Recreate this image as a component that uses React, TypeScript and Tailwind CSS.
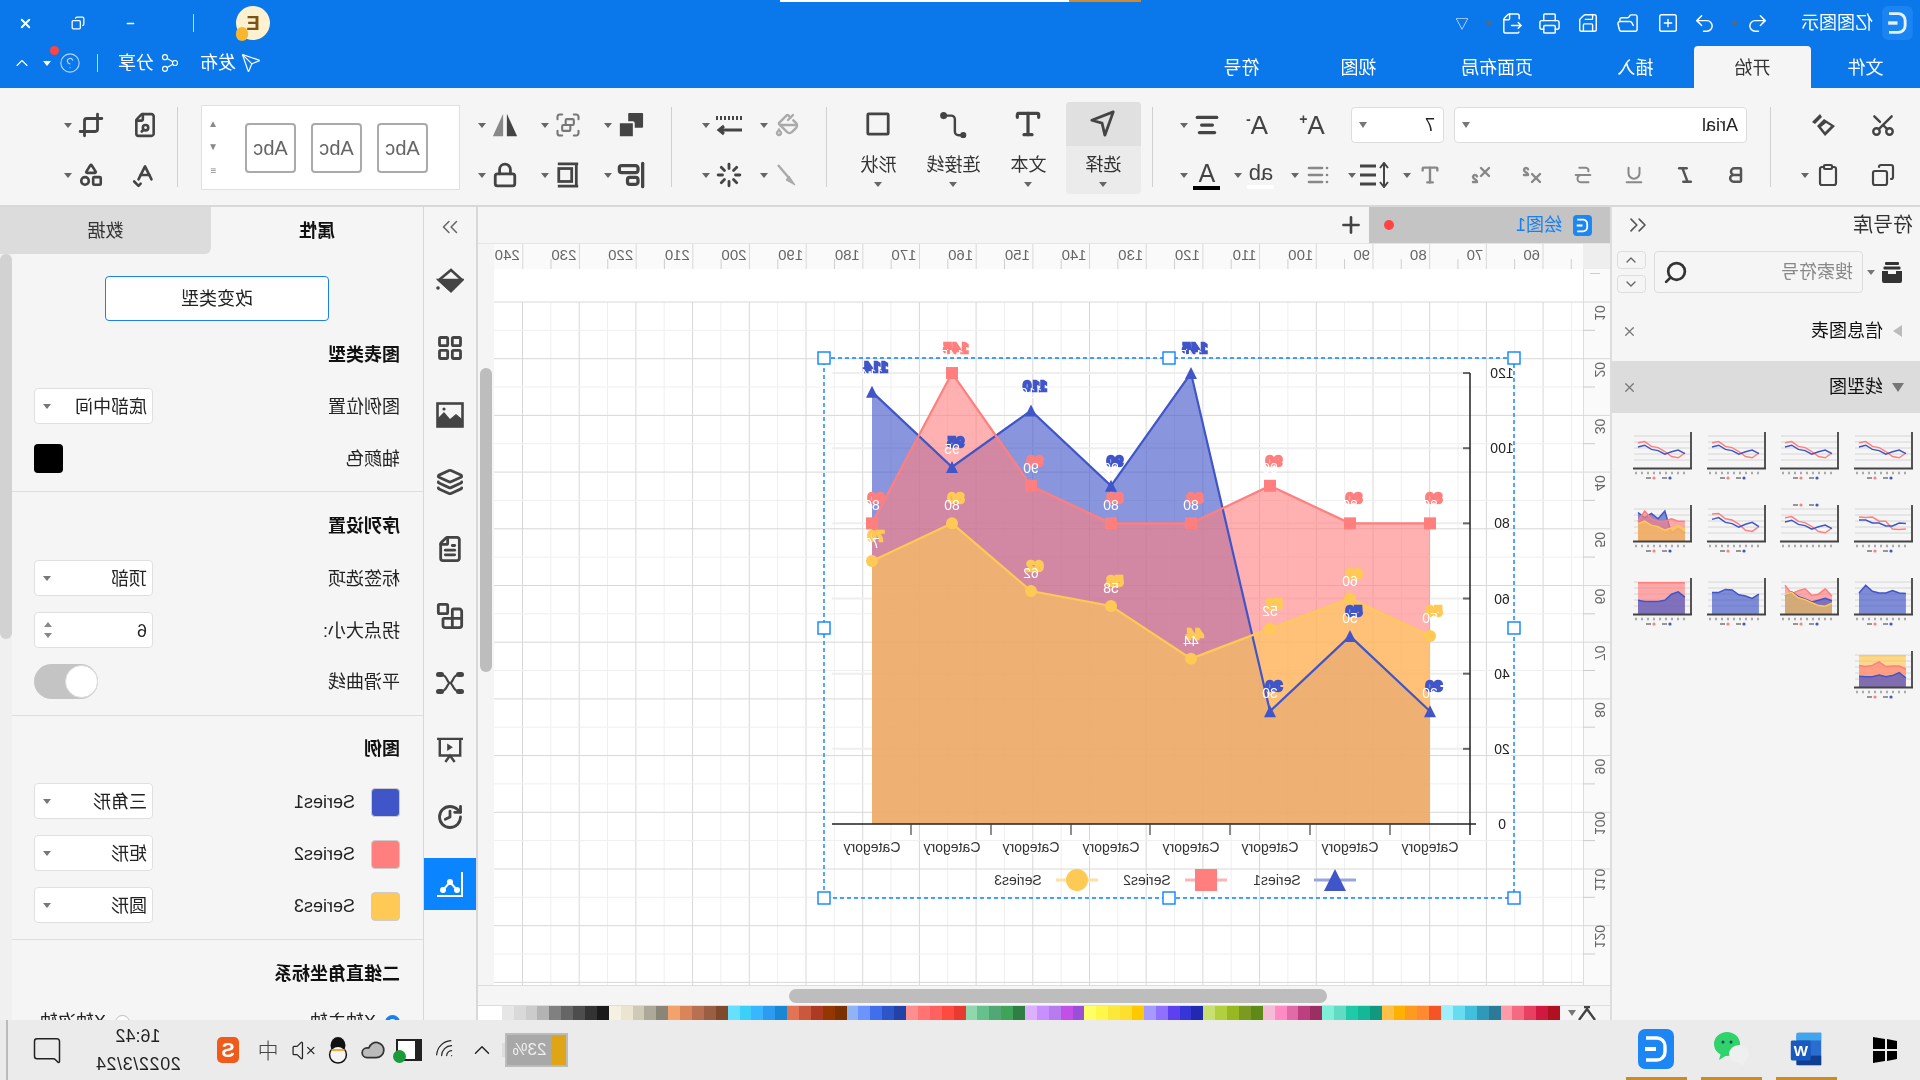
import type { ReactNode } from 'react'
import {
  AlignCenter, AlignStartVertical, Blocks, Bold, ChevronDown, ChevronUp, ChevronsLeft, CircleHelp, Clipboard, Cloud, Copy, Crop,
  FileOutput, FileSearch, FileText, FolderOpen, Group, History, Italic, Layers, LayoutGrid, List, Loader,
  Lock, MessageSquare, Minus, PaintBucket, Plus, Printer, Redo2, Save, Scissors, Search,
  Send, Shapes, Share2, SpellCheck, SquarePlus, Strikethrough, Subscript, Superscript, Type, Underline, Undo2, VolumeX,
  Wifi, X,
} from 'lucide-react'

const mx = (x: number) => 1920 - x

function Caret({ className = 'border-t-[#666]' }: { className?: string }) {
  return <span className={`ml-[3px] h-0 w-0 border-x-[4px] border-t-[5px] border-x-transparent ${className}`} />
}

function Tool({ className = '', caret, children }: { className?: string; caret?: boolean; children: ReactNode }) {
  return (
    <div className={`flex shrink-0 items-center ${className}`}>
      <div className="flex w-[32px] justify-center text-[#444]">{children}</div>
      {caret && <Caret />}
    </div>
  )
}

function Sep() {
  return <div className="h-[80px] w-[1px] shrink-0 self-center bg-[#d0d0d0]" />
}

function Rows({ className = '', children }: { className?: string; children: ReactNode }) {
  return <div className={`flex shrink-0 flex-col gap-[14px] pt-[19px] ${className}`}>{children}</div>
}

function Row({ children }: { children: ReactNode }) {
  return <div className="flex h-[36px] items-center">{children}</div>
}

function BigButton({ label, active, children }: { label: string; active?: boolean; children: ReactNode }) {
  return (
    <div className={`flex h-[92px] w-[75px] flex-col items-center rounded-sm ${active ? 'bg-[#ebebeb]' : ''}`}>
      <div className={`flex h-[44px] w-full items-center justify-center rounded-t-sm text-[#444] ${active ? 'bg-[#e0e0e0]' : ''}`}>{children}</div>
      <span className="mt-[7px] text-[18px] leading-[24px] text-[#333]">{label}</span>
      <span className="mt-[5px] h-0 w-0 border-x-[4px] border-t-[5px] border-x-transparent border-t-[#666]" />
    </div>
  )
}

function Logo({ className = '' }: { className?: string }) {
  return (
    <svg viewBox="0 0 36 40" className={className}>
      <rect width="36" height="40" rx="7" fill="#1c86f5" />
      <path d="M28 9H17a8 8 0 0 0-8 8v6a8 8 0 0 0 8 8h11" fill="none" stroke="#fff" strokeWidth="3.4" />
      <path d="M18 20h11" stroke="#fff" strokeWidth="4" />
    </svg>
  )
}

function PainterIcon({ color = '#444' }: { color?: string }) {
  return (
    <svg viewBox="0 0 26 26" className="h-[26px] w-[26px]" fill={color}>
      <path d="M16 2l8 8-3 2-7-7z" />
      <path d="M12 7l7 7-8 10-10-10z M10 11l-5 3 6 6 4-5z" fillRule="evenodd" />
    </svg>
  )
}

function Header() {
  return (
    <header className="relative h-[88px] shrink-0 bg-[#0a78ea] text-white">
      <div className="absolute left-[779px] top-0 flex h-[2px] w-[361px]">
        <div className="w-[72px] bg-[#d08a2e]" />
        <div className="flex-1 bg-white" />
      </div>
      <div className="flex h-[46px] items-center pl-[5px]">
        <Logo className="h-[34px] w-[35px] opacity-90" />
        <span className="ml-[7px] text-[18px]">亿图图示</span>
        <div className="ml-[27px] flex items-center [&_*]:!text-white">
          <Tool className="w-[53px]" caret><Undo2 size={23} strokeWidth={1.5} /></Tool>
          <Tool className="w-[37px]"><Redo2 size={23} strokeWidth={1.5} /></Tool>
          <Tool className="w-[40px]"><SquarePlus size={22} strokeWidth={1.5} /></Tool>
          <Tool className="w-[40px]"><FolderOpen size={23} strokeWidth={1.5} /></Tool>
          <Tool className="w-[38px]"><Save size={22} strokeWidth={1.5} /></Tool>
          <Tool className="w-[38px]"><Printer size={23} strokeWidth={1.5} /></Tool>
          <Tool className="w-[50px]" caret><FileOutput size={23} strokeWidth={1.5} /></Tool>
          <Tool className="w-[32px]"><span className="text-[13px] leading-none">▽</span></Tool>
        </div>
        <div className="ml-auto flex items-center pr-[10px] [&_svg]:!text-white">
          <div className="relative flex h-[34px] w-[34px] items-center justify-center rounded-full bg-[#fdf1cf] text-[20px] font-bold text-[#7a5414]">
            E
            <span className="absolute -bottom-[1px] right-0 h-[14px] w-[12px] rounded-full bg-[#f8b52e]" />
          </div>
          <div className="ml-[42px] h-[18px] w-[1px] bg-white/70" />
          <div className="ml-[46px] flex w-[53px]"><Tool><Minus size={11} strokeWidth={3} /></Tool></div>
          <div className="flex w-[52px]"><Tool><Copy size={14} strokeWidth={2.2} /></Tool></div>
          <Tool><X size={15} strokeWidth={3} /></Tool>
        </div>
      </div>
      <div className="flex h-[42px] items-end pt-[2px] text-[18px]">
        <div className="flex h-full w-[109px] items-center justify-center">文件</div>
        <div className="-mt-[2px] flex h-[42px] w-[117px] items-center justify-center rounded-t-sm bg-[#f5f5f5] pt-[2px] text-[#333]">开始</div>
        <div className="flex h-full w-[117px] items-center justify-center">插入</div>
        <div className="flex h-full w-[160px] items-center justify-center">页面布局</div>
        <div className="flex h-full w-[117px] items-center justify-center">视图</div>
        <div className="flex h-full w-[117px] items-center justify-center">符号</div>
        <div className="ml-auto flex h-full items-center pb-[10px] pr-[12px]">
          <Send size={20} strokeWidth={1.4} />
          <span className="ml-[5px]">发布</span>
          <Share2 size={20} strokeWidth={1.4} className="ml-[20px]" />
          <span className="ml-[6px]">分享</span>
          <div className="ml-[20px] h-[18px] w-[1px] bg-white/70" />
          <div className="relative ml-[16px]">
            <CircleHelp size={22} strokeWidth={1.2} className="text-[#b5d8ff]" />
            <span className="absolute -right-[9px] -top-[6px] h-[9px] w-[9px] rounded-full bg-[#f44]" />
          </div>
          <Caret className="ml-[8px] border-t-white" />
          <ChevronUp size={20} strokeWidth={1.3} className="ml-[11px]" />
        </div>
      </div>
    </header>
  )
}

function FontSelect({ className, label }: { className: string; label: string }) {
  return (
    <div className={`flex h-[36px] items-center justify-between rounded-sm border border-[#ddd] bg-white pl-[8px] pr-[7px] text-[18px] text-[#222] ${className}`}>
      {label}
      <span className="h-0 w-0 border-x-[4px] border-t-[6px] border-x-transparent border-t-[#777]" />
    </div>
  )
}

function Toolbar() {
  return (
    <div className="flex h-[119px] shrink-0 border-b-2 border-[#d8d8d8] bg-[#f5f5f5]">
      <Rows className="w-[149px] pl-[21px]">
        <Row>
          <Tool className="w-[60px]"><Scissors size={26} strokeWidth={2.2} className="-rotate-90" /></Tool>
          <Tool><PainterIcon /></Tool>
        </Row>
        <Row>
          <Tool className="w-[55px]"><Copy size={24} strokeWidth={2.2} /></Tool>
          <Tool caret><Clipboard size={24} strokeWidth={2.2} /></Tool>
        </Row>
      </Rows>
      <Sep />
      <Rows className="w-[617px] pl-[18px]">
        <Row>
          <FontSelect className="ml-[5px] w-[293px]" label="Arial" />
          <FontSelect className="ml-[10px] w-[93px]" label="7" />
          <Tool className="ml-[23px] w-[55px]"><span className="text-[26px] leading-none">A<span className="align-top text-[14px] font-bold">+</span></span></Tool>
          <Tool className="w-[50px]"><span className="text-[26px] leading-none">A<span className="align-top text-[14px] font-bold">-</span></span></Tool>
          <Tool caret><AlignCenter size={26} strokeWidth={3} /></Tool>
        </Row>
        <Row>
          <Tool className="w-[51px]"><Bold size={20} strokeWidth={3} className="text-[#555]" /></Tool>
          <Tool className="w-[51px]"><Italic size={20} strokeWidth={3} className="text-[#555]" /></Tool>
          <Tool className="w-[51px]"><Underline size={22} strokeWidth={2.2} className="text-[#888]" /></Tool>
          <Tool className="w-[51px]"><Strikethrough size={22} strokeWidth={2.2} className="text-[#888]" /></Tool>
          <Tool className="w-[51px]"><Superscript size={24} strokeWidth={2.4} className="text-[#888]" /></Tool>
          <Tool className="w-[51px]"><Subscript size={24} strokeWidth={2.4} className="text-[#888]" /></Tool>
          <Tool className="w-[55px]" caret><Type size={22} strokeWidth={2.6} className="text-[#888]" /></Tool>
          <Tool className="w-[57px]" caret>
            <svg viewBox="0 0 30 26" className="h-[26px] w-[30px]" fill="none" stroke="#444">
              <path d="M6 1v24M2 6l4-5 4 5M2 20l4 5 4-5" strokeWidth="2" />
              <path d="M14 4h16M14 13h16M14 22h16" strokeWidth="3.2" />
            </svg>
          </Tool>
          <Tool className="w-[57px]" caret><List size={24} strokeWidth={2.6} className="text-[#888]" /></Tool>
          <Tool className="w-[54px]" caret>
            <div className="flex flex-col items-center text-[22px] font-medium leading-[24px]">ab<span className="h-[4px] w-[27px] bg-white" /></div>
          </Tool>
          <Tool caret>
            <div className="flex flex-col items-center text-[25px] leading-[26px]">A<span className="h-[4px] w-[27px] bg-black" /></div>
          </Tool>
        </Row>
      </Rows>
      <Sep />
      <div className="ml-[11px] mr-[14px] flex shrink-0 pt-[14px]">
        <BigButton label="选择" active>
          <svg viewBox="0 0 30 32" className="h-[30px] w-[28px]" fill="none" stroke="#444" strokeWidth="3" strokeLinejoin="round">
            <path d="M4 3l23 9-11 3-3 13z" />
          </svg>
        </BigButton>
        <BigButton label="文本"><Type size={32} strokeWidth={2.4} /></BigButton>
        <BigButton label="连接线">
          <svg viewBox="0 0 30 30" className="h-[28px] w-[28px]" fill="none" stroke="#444" strokeWidth="2.6">
            <path d="M5 27h4a4 4 0 0 0 4-4V10a4 4 0 0 1 4-4h5" /><circle cx="25" cy="6" r="2.5" fill="#444" /><circle cx="4" cy="27" r="2" fill="#444" />
          </svg>
        </BigButton>
        <BigButton label="形状">
          <svg viewBox="0 0 28 28" className="h-[26px] w-[26px]" fill="none" stroke="#444" strokeWidth="3"><rect x="3" y="3" width="22" height="22" rx="1" /></svg>
        </BigButton>
      </div>
      <Sep />
      <Rows className="w-[154px] pl-[23px]">
        <Row>
          <Tool className="w-[58px]" caret><PaintBucket size={24} strokeWidth={2.4} className="text-[#aaa]" /></Tool>
          <Tool caret>
            <svg viewBox="0 0 28 24" className="h-[24px] w-[28px]" fill="none" stroke="#444">
              <path d="M1 5h26" strokeWidth="4" strokeDasharray="2 2" /><path d="M1 17h22M19 13l5 4-5 4" strokeWidth="3" />
            </svg>
          </Tool>
        </Row>
        <Row>
          <Tool className="w-[58px]" caret>
            <svg viewBox="0 0 24 24" className="h-[24px] w-[24px]" fill="none" stroke="#aaa"><path d="M21 2 10 15" strokeWidth="2.4" /><path d="M10 13 4 22l9-5z" fill="#aaa" strokeWidth="1" /></svg>
          </Tool>
          <Tool caret><Loader size={26} strokeWidth={2.6} /></Tool>
        </Row>
      </Rows>
      <Sep />
      <Rows className="w-[211px] pl-[24px]">
        <Row>
          <Tool className="w-[63px]" caret>
            <svg viewBox="0 0 28 28" className="h-[26px] w-[26px]" fill="#444"><rect x="1" y="1" width="16" height="16" rx="1" /><rect x="11" y="11" width="16" height="16" rx="1" stroke="#f5f5f5" strokeWidth="2" /></svg>
          </Tool>
          <Tool className="w-[63px]" caret><Group size={28} strokeWidth={1.8} className="text-[#777]" /></Tool>
          <Tool caret>
            <svg viewBox="0 0 30 28" className="h-[28px] w-[28px]"><path d="M2 26 13 2v24z" fill="#444" /><path d="M17 2v24h11z" fill="#888" /></svg>
          </Tool>
        </Row>
        <Row>
          <Tool className="w-[63px]" caret><AlignStartVertical size={28} strokeWidth={2.8} /></Tool>
          <Tool className="w-[63px]" caret>
            <svg viewBox="0 0 26 28" className="h-[28px] w-[24px]" fill="none" stroke="#444" strokeWidth="3"><path d="M2 2h22M2 26h22" /><rect x="9" y="7" width="14" height="14" /><path d="M4 2v24" /></svg>
          </Tool>
          <Tool caret><Lock size={26} strokeWidth={2.6} /></Tool>
        </Row>
      </Rows>
      <div className="mt-[17px] flex h-[85px] w-[259px] shrink-0 items-center border border-[#e0e0e0] bg-white pl-[31px] pr-[6px]">
        {[0, 1, 2].map((i) => (
          <div key={i} className="mr-[15px] flex h-[50px] w-[51px] items-center justify-center rounded border-2 border-[#aaa] text-[20px] text-[#666]">Abc</div>
        ))}
        <div className="ml-auto flex h-full flex-col items-center justify-around py-[6px] text-[10px] leading-none text-[#888]">
          <span>▲</span><span>▼</span><span>≡</span>
        </div>
      </div>
      <div className="w-[23px] shrink-0" />
      <Sep />
      <Rows className="pl-[16px]">
        <Row>
          <Tool className="w-[54px]"><FileSearch size={26} strokeWidth={2.4} /></Tool>
          <Tool caret><Crop size={26} strokeWidth={2.6} /></Tool>
        </Row>
        <Row>
          <Tool className="w-[54px]"><SpellCheck size={26} strokeWidth={2.4} /></Tool>
          <Tool caret><Shapes size={26} strokeWidth={2.4} /></Tool>
        </Row>
      </Rows>
    </div>
  )
}

type Mini = { legendTop?: boolean; s: { c: string; v: number[]; area?: boolean }[] }
const R1 = [84, 88, 72, 68, 55, 38, 34, 50]
const B1 = [70, 76, 62, 58, 46, 54, 60, 48]
const lineThumb = (r: number[] = R1, b: number[] = B1, legendTop = false): Mini => ({ legendTop, s: [{ c: '#ff7f7f', v: r }, { c: '#4055c8', v: b }] })
const AREA3: Mini = {
  s: [
    { c: '#4055c8', v: [95, 78, 92, 74, 100, 26, 42, 26], area: true },
    { c: '#ff7f7f', v: [66, 100, 74, 66, 66, 74, 66, 66], area: true },
    { c: '#ffc955', v: [58, 66, 52, 48, 36, 44, 50, 40], area: true },
  ],
}
const thumbs: Mini[] = [
  lineThumb(), lineThumb(), lineThumb(), lineThumb(),
  lineThumb([80, 78, 80, 66, 66, 40, 38, 40], [70, 70, 60, 60, 50, 50, 60, 58]),
  lineThumb(R1, B1, true),
  lineThumb([90, 92, 74, 70, 56, 36, 32, 48], [72, 78, 62, 58, 46, 56, 62, 48]),
  AREA3,
  { s: [{ c: '#4055c8', v: [70, 96, 76, 70, 70, 78, 70, 68], area: true }] },
  { s: [
    { c: '#ff7f7f', v: [96, 68, 78, 84, 62, 66, 84, 60], area: true },
    { c: '#4055c8', v: [60, 74, 58, 50, 40, 46, 52, 44], area: true },
    { c: '#ffc955', v: [66, 72, 54, 48, 38, 28, 26, 36], area: true },
  ] },
  { s: [{ c: '#4055c8', v: [72, 72, 82, 80, 64, 60, 52, 66], area: true }] },
  { s: [
    { c: '#ff7f7f', v: [104, 104, 104, 104, 104, 104, 104, 104], area: true },
    { c: '#4055c8', v: [46, 42, 42, 42, 46, 66, 74, 56], area: true },
  ] },
  { s: [
    { c: '#ffc955', v: [104, 104, 104, 104, 104, 104, 104, 104], area: true },
    { c: '#ff7f7f', v: [72, 68, 72, 84, 68, 70, 70, 60], area: true },
    { c: '#4055c8', v: [36, 34, 34, 40, 34, 38, 48, 30], area: true },
  ] },
]

function MiniChart({ t }: { t: Mini }) {
  const px = (i: number) => 6 + i * 6.7
  const py = (v: number) => (t.legendTop ? 41 : 39) - v * 0.3
  return (
    <svg viewBox="0 0 66 52" className="h-[52px] w-[66px] blur-[0.5px]">
      <g transform="translate(66 0) scale(-1 1)">
        {[7, 13, 19, 25, 31].map((y) => <path key={y} d={`M2 ${y}H58`} stroke="#d4d4d4" strokeWidth="0.9" />)}
        {t.s.map((s, i) => (
          <g key={i}>
            {s.area && <polygon points={`${px(0)},39 ${s.v.map((v, j) => `${px(j)},${py(v)}`).join(' ')} ${px(7)},39`} fill={s.c} fillOpacity="0.66" />}
            <polyline points={s.v.map((v, j) => `${px(j)},${py(v)}`).join(' ')} fill="none" stroke={s.c} strokeWidth="1.5" />
          </g>
        ))}
        <path d="M1 39.5H60M59 3V40" stroke="#444" strokeWidth="1.8" />
        <path d="M3 44h54" stroke="#aaa" strokeWidth="2.4" strokeDasharray="2 4" />
        <circle cx="22" cy={t.legendTop ? 3 : 49} r="1.6" fill="#ff7f7f" />
        <circle cx="38" cy={t.legendTop ? 3 : 49} r="1.6" fill="#4055c8" />
        <path d={t.legendTop ? 'M14 3h5M30 3h5' : 'M14 49h5M30 49h5'} stroke="#777" strokeWidth="1.4" />
      </g>
    </svg>
  )
}

function SymbolPanel() {
  return (
    <aside className="flex w-[310px] shrink-0 flex-col border-r-2 border-[#ddd] bg-[#f5f5f5]">
      <div className="flex h-[36px] items-center justify-between pl-[7px] pr-[12px]">
        <span className="text-[20px] text-[#333]">符号库</span>
        <ChevronsLeft size={28} strokeWidth={1.4} className="text-[#555]" />
      </div>
      <div className="mt-[8px] flex h-[42px] items-center pl-[17px]">
        <svg viewBox="0 0 22 22" className="h-[22px] w-[22px]" fill="#333">
          <rect x="4" y="1" width="14" height="3" rx="1" /><rect x="2.5" y="5.5" width="17" height="3" rx="1" />
          <path d="M1 10h6v3h8v-3h6v10a2 2 0 0 1-2 2H3a2 2 0 0 1-2-2z" />
        </svg>
        <Caret className="ml-[6px] border-t-[#777]" />
        <div className="ml-[4px] flex h-[42px] w-[209px] items-center justify-between rounded-sm border border-[#ddd] pl-[9px] pr-[8px]">
          <span className="text-[18px] text-[#888]">搜索符号</span>
          <Search size={25} strokeWidth={2.6} className="text-[#333]" />
        </div>
        <div className="ml-[8px] flex w-[29px] flex-col gap-[6px]">
          <div className="flex h-[18px] items-center justify-center rounded-sm border border-[#ddd]"><ChevronUp size={16} className="text-[#666]" /></div>
          <div className="flex h-[18px] items-center justify-center rounded-sm border border-[#ddd]"><ChevronDown size={16} className="text-[#666]" /></div>
        </div>
      </div>
      <div className="mt-[12px] flex h-[52px] items-center pl-[18px] pr-[10px]">
        <span className="h-0 w-0 border-y-[6px] border-l-[9px] border-y-transparent border-l-[#bbb]" />
        <span className="ml-[10px] text-[18px] text-[#111]">信息图表</span>
        <X size={15} className="ml-auto text-[#777]" />
      </div>
      <div className="mt-[4px] flex h-[52px] items-center bg-[#dcdcdc] pl-[16px] pr-[10px]">
        <span className="h-0 w-0 border-x-[6px] border-t-[9px] border-x-transparent border-t-[#777]" />
        <span className="ml-[9px] text-[18px] text-[#111]">线型图</span>
        <X size={15} className="ml-auto text-[#777]" />
      </div>
      <div className="grid grid-cols-[repeat(4,73.5px)] gap-y-[21px] pl-[1px] pt-[16px]">
        {thumbs.map((t, i) => (
          <MiniChart key={i} t={t} />
        ))}
      </div>
    </aside>
  )
}

const tickX = (v: number) => 1543 - (v - 60) * 5.668

function HRuler() {
  const values = Array.from({ length: 19 }, (_, i) => 60 + i * 10)
  return (
    <svg viewBox="337 243 1089 26" className="h-[26px] w-[1089px] bg-[#fafafa]">
      {values.map((v) => (
        <g key={v}>
          <path d={`M${mx(tickX(v))} 243V269`} stroke="#d8d8d8" strokeWidth="1" />
          <path d={`M${mx(tickX(v) + 28.3)} 258V269`} stroke="#cfcfcf" strokeWidth="1" />
          <text x={mx(tickX(v)) + 3} y="259" fontSize="15" fill="#666" fontFamily="Liberation Sans">{v}</text>
        </g>
      ))}
      <path d="M337 268.5H1426" stroke="#ddd" />
    </svg>
  )
}

function VRuler() {
  return (
    <svg viewBox="310 269 27 716" className="h-[716px] w-[27px] shrink-0 bg-[#fafafa]">
      <path d="M336.5 269V985" stroke="#ddd" />
      <path d="M320 273.5H330" stroke="#ccc" />
      {Array.from({ length: 12 }, (_, k) => {
        const y = 302 + k * 56.7
        return (
          <g key={k}>
            <path d={`M310 ${y}H337`} stroke="#d8d8d8" />
            <path d={`M325 ${y + 28.3}H337`} stroke="#ccc" />
            <text transform={`translate(325 ${y + 11}) rotate(-90)`} textAnchor="middle" fontSize="14" fill="#666" fontFamily="Liberation Sans">{(k + 1) * 10}</text>
          </g>
        )
      })}
    </svg>
  )
}

const chartX = [872, 952, 1031, 1111, 1191, 1270, 1350, 1430]
const cy = (v: number) => 824 - 3.758 * v
const series = [
  { color: '#4055c8', shape: 'tri', v: [115, 95, 110, 90, 120, 30, 50, 30], lab: ['114', '95', '110', '90', '145', '30', '50', '30'] },
  { color: '#ff7f7f', shape: 'sq', v: [80, 120, 90, 80, 80, 90, 80, 80], lab: ['80', '145', '90', '80', '80', '90', '80', '80'] },
  { color: '#ffc955', shape: 'dot', v: [70, 80, 62, 58, 44, 52, 60, 50], lab: ['70', '80', '62', '58', '44', '52', '60', '50'] },
]

function Marker({ shape, color, x, y, r = 6 }: { shape: string; color: string; x: number; y: number; r?: number }) {
  if (shape === 'tri') return <polygon points={`${x - r},${y + r} ${x + r},${y + r} ${x},${y - r}`} fill={color} />
  if (shape === 'sq') return <rect x={x - r} y={y - r} width={r * 2} height={r * 2} fill={color} />
  return <circle cx={x} cy={y} r={r} fill={color} />
}

function CanvasArt() {
  const majorX = Array.from({ length: 20 }, (_, i) => 522.5 + i * 56.7)
  const majorY = Array.from({ length: 13 }, (_, i) => 302 + i * 56.7)
  const handles = [[824, 358], [1169, 358], [1514, 358], [824, 628], [1514, 628], [824, 898], [1169, 898], [1514, 898]]
  return (
    <svg viewBox="337 269 1089 716" className="absolute inset-0 h-full w-full" fontFamily="Liberation Sans">
      {/* page grid */}
      {majorX.map((x) => (
        <g key={x}>
          <path d={`M${mx(x + 28.3)} 302V985`} stroke="#efefef" />
          <path d={`M${mx(x)} 302V985`} stroke="#d8d8d8" />
        </g>
      ))}
      {majorY.map((y) => (
        <g key={y}>
          <path d={`M337 ${y + 28.3}H1426`} stroke="#efefef" />
          <path d={`M337 ${y}H1426`} stroke="#d8d8d8" />
        </g>
      ))}

      {/* value lines and axes */}
      {[20, 40, 60, 80, 100, 120].map((v) => (
        <g key={v}>
          <path d={`M${mx(832)} ${cy(v)}H${mx(1470)}`} stroke="#eee" strokeWidth="2" />
          <path d={`M${mx(1470)} ${cy(v)}H${mx(1463)}`} stroke="#666" strokeWidth="2" />
        </g>
      ))}
      {series.map((s) => {
        const pts = s.v.map((v, i) => `${mx(chartX[i])},${cy(v)}`).join(' ')
        return <polygon key={s.color} points={`${mx(chartX[0])},824 ${pts} ${mx(chartX[7])},824`} fill={s.color} fillOpacity="0.62" />
      })}
      {series.map((s) => (
        <polyline key={s.color} points={s.v.map((v, i) => `${mx(chartX[i])},${cy(v)}`).join(' ')} fill="none" stroke={s.color} strokeWidth="2.2" />
      ))}
      <path d={`M${mx(832)} 824H${mx(1476)}M${mx(1470)} 373V835`} stroke="#222" strokeWidth="1.5" fill="none" />
      {[911, 991, 1071, 1150, 1230, 1310, 1390].map((x) => <path key={x} d={`M${mx(x)} 824V835`} stroke="#444" strokeWidth="1.2" />)}
      {[0, 20, 40, 60, 80, 100, 120].map((v) => (
        <text key={v} x={mx(1502)} y={cy(v) + 5} textAnchor="middle" fontSize="14" fill="#222" stroke="#fff" strokeWidth="3" paintOrder="stroke">{v}</text>
      ))}
      {chartX.map((x) => (
        <text key={x} x={mx(x)} y="852" textAnchor="middle" fontSize="14" fill="#333" stroke="#fff" strokeWidth="3" paintOrder="stroke">Category</text>
      ))}

      {/* markers and data labels */}
      {series.map((s) => s.v.map((v, i) => <Marker key={s.color + i} shape={s.shape} color={s.color} x={mx(chartX[i])} y={cy(v)} />))}
      {series.map((s) => s.v.map((v, i) => (
        <g key={s.color + i} textAnchor="middle">
          <text x={mx(chartX[i] + 4)} y={cy(v) - 20} fontSize="15" fill={s.color} stroke={s.color} strokeWidth="2.4" fontWeight="bold">{s.lab[i]}</text>
          <text x={mx(chartX[i])} y={cy(v) - 13} fontSize="14" fill="#fff">{s.lab[i]}</text>
        </g>
      )))}

      {/* legend */}
      <g fontSize="14" fill="#333">
        <path d={`M${mx(1356)} 880H${mx(1314)}`} stroke="#98a3e0" strokeWidth="3" />
        <Marker shape="tri" color="#4055c8" x={mx(1335)} y={880} r={11} />
        <text x={mx(1277)} y="885" textAnchor="middle">Series1</text>
        <path d={`M${mx(1227)} 880H${mx(1185)}`} stroke="#ffb4b4" strokeWidth="3" />
        <Marker shape="sq" color="#ff7f7f" x={mx(1206)} y={880} r={11} />
        <text x={mx(1147)} y="885" textAnchor="middle">Series2</text>
        <path d={`M${mx(1098)} 880H${mx(1056)}`} stroke="#ffe0a0" strokeWidth="3" />
        <Marker shape="dot" color="#ffc955" x={mx(1077)} y={880} r={11} />
        <text x={mx(1018)} y="885" textAnchor="middle">Series3</text>
      </g>

      {/* selection */}
      <rect x={mx(1514)} y="358" width="690" height="540" fill="none" stroke="#0a84ff" strokeWidth="1.4" strokeDasharray="4 3" />
      {handles.map(([x, y]) => (
        <rect key={`${x}-${y}`} x={mx(x) - 6} y={y - 6} width="12" height="12" fill="#fff" stroke="#0a84ff" strokeWidth="1.4" />
      ))}
    </svg>
  )
}

const palette = [
  '#ffffff', '#ffffff', '#e6e6e6', '#d9d9d9', '#cccccc', '#b3b3b3', '#808080', '#666666', '#4d4d4d', '#333333', '#1a1a1a',
  '#f5f0e0', '#ebe5d0', '#cfcab5', '#ada998', '#8a8577',
  '#f4a26c', '#d98459', '#b97050', '#9a5f42', '#7f4a2c',
  '#66e0ff', '#3cd0f8', '#38b6ff', '#2d9cf0', '#1b87d4',
  '#e27453', '#c9583c', '#ad3a22', '#933600', '#7a3000',
  '#8fb4f5', '#6c94ff', '#3f6fec', '#2d55c8', '#2342a8',
  '#ff8e8e', '#ff7373', '#ff6060', '#ff4a3f', '#e83a2f',
  '#8fd8ad', '#66c08c', '#52a874', '#3fa35a', '#2f7f44',
  '#dcb0ff', '#c78fff', '#b77aef', '#c24fe8', '#9a4fd8',
  '#ffff66', '#fff84a', '#fbe93a', '#ffdf2e', '#ffc900',
  '#a59aff', '#8f70ff', '#5f40f0', '#3636d8', '#2228b0',
  '#c8e070', '#b0d040', '#96b820', '#7a9a20', '#5f8a15',
  '#f5bcd8', '#ff8ac4', '#e36aa8', '#bc4080', '#9c2f62',
  '#7ff0d8', '#60dcc4', '#1fcaa8', '#14b898', '#109880',
  '#ffc048', '#ffb000', '#ff9a1f', '#ff8a32', '#f55426',
  '#9ff0ff', '#66dcf0', '#40c0dc', '#3098b8', '#2a7a98',
  '#ff9aa8', '#f56a80', '#e84060', '#d01840', '#b01020',
]

function Center() {
  return (
    <main className="flex w-[1132px] shrink-0 flex-col bg-[#f5f5f5]">
      <div className="flex h-[36px] shrink-0 items-center">
        <div className="flex h-full w-[241px] items-center bg-[#c4c4c4] pl-[18px]">
          <Logo className="h-[21px] w-[19px]" />
          <span className="ml-[11px] text-[18px] text-[#1a80f0]">绘图1</span>
          <span className="ml-auto mr-[15px] h-[10px] w-[10px] rounded-full bg-[#f44]" />
        </div>
        <Plus size={26} strokeWidth={2.4} className="ml-[5px] text-[#444]" />
      </div>
      <div className="flex h-[26px] shrink-0 border-t border-[#e4e4e4]">
        <div className="w-[27px] shrink-0 bg-[#eee]" />
        <HRuler />
      </div>
      <div className="flex h-[716px] shrink-0">
        <VRuler />
        <div className="relative w-[1089px] shrink-0 overflow-hidden bg-white">
          <CanvasArt />
        </div>
        <div className="flex w-[16px] shrink-0 justify-center bg-[#f5f5f5] pt-[99px]">
          <div className="h-[304px] w-[12px] rounded-full bg-[#bdbdbd]" />
        </div>
      </div>
      <div className="flex h-[21px] shrink-0 items-center border-y border-[#ddd] pl-[283px]">
        <div className="h-[14px] w-[538px] rounded-full bg-[#bdbdbd]" />
      </div>
      <div className="flex h-[14px] shrink-0">
        <div className="flex w-[50px] shrink-0 items-center pl-[14px]">
          <svg viewBox="0 0 18 14" className="h-[14px] w-[18px]" fill="none" stroke="#444" strokeWidth="2.4"><path d="M1 14 9 3l8 11M6 1h6" /></svg>
          <span className="ml-[2px] h-0 w-0 border-x-[4px] border-t-[6px] border-x-transparent border-t-[#777]" />
        </div>
        <div className="flex flex-1 flex-row-reverse">
          {palette.map((c, i) => <div key={i} className="flex-1" style={{ backgroundColor: c }} />)}
        </div>
      </div>
    </main>
  )
}

function RailIcon({ children }: { children: ReactNode }) {
  return <div className="flex h-[67px] items-center justify-center text-[#444]">{children}</div>
}

function Rail() {
  return (
    <div className="flex w-[55px] shrink-0 flex-col border-l-2 border-r border-[#d8d8d8] bg-[#f5f5f5]">
      <div className="flex h-[40px] items-center justify-center">
        <ChevronsLeft size={26} strokeWidth={1.4} className="-scale-x-100 text-[#666]" />
      </div>
      <RailIcon>
        <svg viewBox="0 0 28 28" className="h-[28px] w-[28px]" fill="none" stroke="#444" strokeWidth="2.6">
          <path d="M13 3 2 13l11 11 12-11z" /><path d="M2 13h23L13 24z" fill="#444" /><circle cx="26" cy="21" r="1.8" fill="#444" stroke="none" />
        </svg>
      </RailIcon>
      <RailIcon><LayoutGrid size={28} strokeWidth={2.4} /></RailIcon>
      <RailIcon>
        <svg viewBox="0 0 28 26" className="h-[26px] w-[28px]" fill="none" stroke="#444" strokeWidth="2.6">
          <rect x="1.5" y="1.5" width="25" height="23" /><path d="M2 24v-7l6-5 6 5 6-7 6 6v8z" fill="#444" stroke="none" /><circle cx="20" cy="7" r="1.6" fill="#444" stroke="none" />
        </svg>
      </RailIcon>
      <RailIcon><Layers size={28} strokeWidth={2.4} /></RailIcon>
      <RailIcon><FileText size={28} strokeWidth={2.4} /></RailIcon>
      <RailIcon><Blocks size={28} strokeWidth={2.4} /></RailIcon>
      <RailIcon>
        <svg viewBox="0 0 28 24" className="h-[24px] w-[28px]" fill="#444">
          <rect x="0" y="1" width="8" height="5" rx="2.5" /><rect x="20" y="1" width="8" height="5" rx="2.5" />
          <rect x="0" y="18" width="8" height="5" rx="2.5" /><rect x="20" y="18" width="8" height="5" rx="2.5" />
          <path d="M6 4c5 0 5 8 8 8s3-8 8-8M6 20c5 0 5-8 8-8s3 8 8 8" fill="none" stroke="#444" strokeWidth="2.2" />
        </svg>
      </RailIcon>
      <RailIcon>
        <svg viewBox="0 0 30 28" className="h-[26px] w-[28px]" fill="none" stroke="#444" strokeWidth="2.6">
          <path d="M1 2h28M4 2v18h22V2M10 27l5-7 5 7" /><path d="M18 7v8l-6-4z" fill="#444" stroke="none" />
        </svg>
      </RailIcon>
      <RailIcon><History size={28} strokeWidth={2.4} /></RailIcon>
      <div className="flex h-[67px] items-center">
        <div className="flex h-[52px] w-full items-center justify-center bg-[#0a84ff]">
          <svg viewBox="0 0 28 28" className="h-[28px] w-[28px]" fill="none" stroke="#fff" strokeWidth="2">
            <path d="M2 2v24h25" /><path d="M7 20l7-8 7 8" />
            <circle cx="7" cy="20" r="2" fill="#fff" /><circle cx="14" cy="12" r="2" fill="#fff" /><circle cx="21" cy="20" r="2" fill="#fff" />
          </svg>
        </div>
      </div>
    </div>
  )
}

function Control({ children, spin }: { children: ReactNode; spin?: boolean }) {
  return (
    <div className="flex h-[36px] w-[119px] items-center justify-between rounded-sm border border-[#e0e0e0] bg-white pl-[5px] pr-[8px] text-[18px] text-[#222]">
      <span className="pt-[2px]">{children}</span>
      {spin ? (
        <span className="flex flex-col gap-[6px] pr-[1px]">
          <span className="h-0 w-0 border-x-[4px] border-b-[5px] border-x-transparent border-b-[#888]" />
          <span className="h-0 w-0 border-x-[4px] border-t-[5px] border-x-transparent border-t-[#888]" />
        </span>
      ) : (
        <span className="h-0 w-0 border-x-[4px] border-t-[5px] border-x-transparent border-t-[#777]" />
      )}
    </div>
  )
}

function PropRow({ label, className = 'mt-[16px]', children }: { label: ReactNode; className?: string; children: ReactNode }) {
  return (
    <div className={`flex h-[36px] shrink-0 items-center justify-between pl-[23px] pr-[22px] text-[18px] text-[#222] ${className}`}>
      <span className="pt-[2px]">{label}</span>
      {children}
    </div>
  )
}

function SectionTitle({ className, children }: { className: string; children: ReactNode }) {
  return <div className={`flex h-[28px] shrink-0 items-center pl-[23px] text-[18px] font-bold text-[#111] ${className}`}>{children}</div>
}

function SeriesLabel({ name, swatch }: { name: string; swatch: string }) {
  return (
    <span className="flex items-center">
      <span className={`h-[29px] w-[29px] rounded-sm border border-[#ccc] ${swatch}`} />
      <span className="ml-[16px]">{name}</span>
    </span>
  )
}

function PropPanel() {
  return (
    <aside className="flex w-[423px] shrink-0 flex-col overflow-hidden bg-[#f5f5f5]">
      <div className="flex h-[47px] shrink-0 pt-[1px] text-[18px]">
        <div className="flex w-[212px] items-center justify-center font-bold text-[#111]">属性</div>
        <div className="-mt-[1px] flex flex-1 items-center justify-center rounded-bl-md bg-[#dcdcdc] pt-[1px] text-[#333]">数据</div>
      </div>
      <div className="flex min-h-0 flex-1">
        <div className="flex min-w-0 flex-1 flex-col">
          <div className="ml-[94px] mt-[22px] flex h-[45px] w-[224px] shrink-0 items-center justify-center rounded-sm border border-[#1a80f0] bg-white pt-[2px] text-[18px] text-[#222]">改变类型</div>
          <SectionTitle className="mt-[20px]">图表类型</SectionTitle>
          <PropRow label="图例位置" className="mt-[19px]"><Control>底部中间</Control></PropRow>
          <PropRow label="轴颜色">
            <span className="flex w-[119px] justify-end"><span className="h-[29px] w-[29px] rounded-sm bg-black" /></span>
          </PropRow>
          <div className="mt-[15px] h-[1px] shrink-0 bg-[#ddd]" />
          <SectionTitle className="mt-[20px]">序列设置</SectionTitle>
          <PropRow label="标签选项" className="mt-[20px]"><Control>顶部</Control></PropRow>
          <PropRow label="拐点大小:"><Control spin>6</Control></PropRow>
          <PropRow label="平滑曲线" className="mt-[15px]">
            <span className="flex h-[35px] w-[64px] items-center rounded-full bg-[#c4c4c4]">
              <span className="h-[33px] w-[33px] rounded-full border border-[#ddd] bg-white" />
            </span>
          </PropRow>
          <div className="mt-[16px] h-[1px] shrink-0 bg-[#ddd]" />
          <SectionTitle className="mt-[19px]">图例</SectionTitle>
          <PropRow label={<SeriesLabel name="Series1" swatch="bg-[#4055c8]" />} className="mt-[20px]"><Control>三角形</Control></PropRow>
          <PropRow label={<SeriesLabel name="Series2" swatch="bg-[#ff7f7f]" />}><Control>矩形</Control></PropRow>
          <PropRow label={<SeriesLabel name="Series3" swatch="bg-[#ffc955]" />}><Control>圆形</Control></PropRow>
          <div className="mt-[16px] h-[1px] shrink-0 bg-[#ddd]" />
          <SectionTitle className="mt-[20px]">二维直角坐标系</SectionTitle>
          <div className="mt-[16px] flex h-[36px] shrink-0 items-center pl-[23px] text-[18px] text-[#222]">
            <span className="h-[15px] w-[15px] rounded-full border-[4px] border-[#1a80f0] bg-white" />
            <span className="ml-[9px]">X轴主轴</span>
            <span className="ml-[180px] h-[15px] w-[15px] rounded-full border border-[#bbb] bg-white" />
            <span className="ml-[9px]">X轴次轴</span>
          </div>
        </div>
        <div className="w-[12px] shrink-0 bg-[#f0f0f0]">
          <div className="h-[385px] rounded-full bg-[#d2d2d2]" />
        </div>
      </div>
    </aside>
  )
}

function Taskbar() {
  return (
    <footer className="flex h-[60px] shrink-0 items-center bg-[#ebebeb] text-[#222]">
      <div className="flex w-[83px] justify-center pr-[13px]">
        <svg viewBox="0 0 24 26" className="h-[26px] w-[24px]" fill="#000"><path d="M0 4l10-2v10H0zM12 2l12-2v12H12zM0 14h10v10L0 22zM12 14h12v12l-12-2z" /></svg>
      </div>
      <div className="flex h-full w-[61px] items-center justify-center border-b-[3px] border-[#c98a2a]">
        <svg viewBox="0 0 36 40" className="h-[38px] w-[36px]">
          <path d="M2 3h24l2 2v30l-2 2H2z" fill="#2a6dd0" /><path d="M2 3h26v8H2z" fill="#41a5ee" /><path d="M2 27h26v10H2z" fill="#103f91" />
          <rect x="13" y="11" width="21" height="21" rx="1.5" fill="#185abd" />
          <text x="23.5" y="27" textAnchor="middle" fontSize="16" fontWeight="bold" fill="#fff" fontFamily="Liberation Sans">W</text>
        </svg>
      </div>
      <div className="ml-[14px] flex h-full w-[61px] items-center justify-center border-b-[3px] border-[#c98a2a]">
        <svg viewBox="0 0 36 36" className="h-[36px] w-[36px] -scale-x-100">
          <ellipse cx="14" cy="13" rx="13" ry="12" fill="#2fd26b" /><path d="M8 22l-2 7 8-5z" fill="#2fd26b" />
          <ellipse cx="26" cy="23" rx="10" ry="9" fill="#efefef" /><path d="M30 30l2 5-7-3z" fill="#efefef" />
          <circle cx="10" cy="11" r="1.5" fill="#146" /><circle cx="18" cy="11" r="1.5" fill="#146" />
        </svg>
      </div>
      <div className="ml-[14px] flex h-full w-[61px] items-center justify-center border-b-[3px] border-[#c98a2a]">
        <Logo className="h-[40px] w-[36px]" />
      </div>
      <div className="ml-auto flex items-center">
        <div className="relative flex h-[34px] w-[63px] items-center border-2 border-[#bbb] bg-[#a8a8a8]">
          <div className="h-full w-[14px] bg-[#e0a417]" />
          <span className="flex-1 text-center text-[17px] text-[#eee]">23%</span>
          <span className="absolute -right-[5px] top-[8px] h-[14px] w-[3px] bg-[#ddd]" />
        </div>
        <ChevronUp size={26} strokeWidth={1.3} className="ml-[10px]" />
        <Wifi size={24} strokeWidth={1.2} className="ml-[11px] -scale-x-100 rotate-45" />
        <div className="relative ml-[12px] h-[22px] w-[26px] border-2 border-[#222] bg-white">
          <span className="absolute left-0 top-0 h-full w-[5px] bg-[#222]" />
          <span className="absolute -bottom-[4px] -right-[5px] h-[13px] w-[13px] rounded-full bg-[#1a9a3a]" />
        </div>
        <Cloud size={26} strokeWidth={1.6} fill="#bbb" className="ml-[10px] text-[#333]" />
        <svg viewBox="0 0 22 30" className="ml-[11px] h-[28px] w-[22px]">
          <ellipse cx="11" cy="10" rx="8" ry="9" fill="#111" /><ellipse cx="11" cy="20" rx="9" ry="9" fill="#f5f5f5" stroke="#111" strokeWidth="1.6" /><path d="M4 15h14" stroke="#f5a623" strokeWidth="2" />
        </svg>
        <VolumeX size={25} strokeWidth={1.2} className="ml-[11px] -scale-x-100" />
        <span className="ml-[11px] w-[24px] text-center text-[21px] font-light leading-none text-[#444]">中</span>
        <span className="ml-[17px] flex h-[26px] w-[22px] items-center justify-center rounded-[5px] bg-[#f05a1a] text-[20px] font-bold leading-none text-white">S</span>
        <div className="ml-[29px] flex w-[100px] flex-col items-center text-[18px] leading-[28px]">
          <span>16:42</span>
          <span className="tracking-[0.6px]">2022/3/24</span>
        </div>
        <MessageSquare size={30} strokeWidth={1.2} className="ml-[26px]" />
        <div className="ml-[24px] h-[60px] w-[2px] bg-[#bbb]" />
        <div className="w-[6px]" />
      </div>
    </footer>
  )
}

export default function App() {
  return (
    <div className="flex h-[1080px] w-[1920px] -scale-x-100 flex-col overflow-hidden bg-[#f5f5f5] font-['Liberation_Sans','Noto_Sans_CJK_SC',sans-serif]">
      <Header />
      <Toolbar />
      <div className="flex min-h-0 flex-1">
        <SymbolPanel />
        <Center />
        <Rail />
        <PropPanel />
      </div>
      <Taskbar />
    </div>
  )
}
